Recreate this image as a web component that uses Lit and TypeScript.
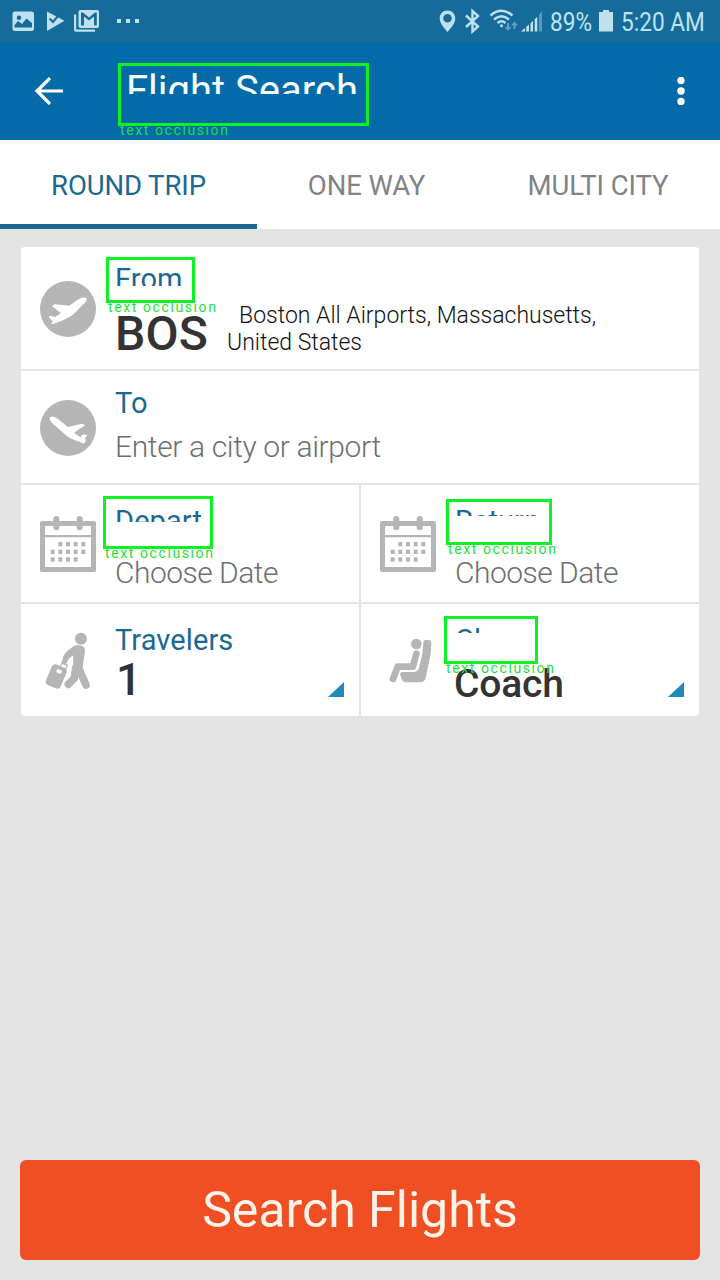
import { LitElement, html, svg, css } from "lit";
import { customElement, property } from "lit/decorators.js";

const statusLeft = svg`
  <path fill-rule="evenodd" d="M14.500 11.500H31.500Q34 11.500 34 14V28.500Q34 31 31.500 31H15Q12.500 31 12.500 28.500V14Q12.500 11.500 14.500 11.500ZM14.500 27.500H32V23L26.500 18.500L22 24L18 21L14.500 25ZM19 15.500A2.200 2.200 0 1 0 19 20A2.200 2.200 0 1 0 19 15.500Z"/>
  <path d="M47 11.500L64.500 20.800L47 31Z"/>
  <path fill="none" stroke="#156c9a" stroke-width="2" d="M49.500 18.500L53 22L60.500 13"/>
  <path fill-rule="evenodd" d="M80.500 10H97Q99 10 99 12V26Q99 28 97 28H80.500Q78.500 28 78.500 26V12Q78.500 10 80.500 10ZM81 25.500H84V16.500L89 20.500L94 16.500V25.500H96.800V12.500H95L89 17.500L83 12.500H81Z"/>
  <path d="M74 14.500H76.200V29.500H95V31.800H76Q74 31.800 74 29.800Z"/>
  <rect x="117" y="19" width="4" height="4"/><rect x="126" y="19" width="4" height="4"/><rect x="135" y="19" width="4" height="4"/>`;

const statusMid = svg`
  <path fill-rule="evenodd" d="M17.500 10.500C13 10.500 9.700 14 9.700 18.300C9.700 23.500 14 28 17.500 32C21 28 25.300 23.500 25.300 18.300C25.300 14 22 10.500 17.500 10.500ZM17.500 14A4.300 4.300 0 1 1 17.500 22.600A4.300 4.300 0 1 1 17.500 14Z"/>
  <path class="line" d="M36 15.500L48 26.500L42.500 31.500V11L48 16L36 27"/>
  <path class="line" d="M60.500 15.500Q71.500 6 82.500 15.500M64 19.500Q71.500 13 79 19.500M67.500 23Q71.500 19.500 75.500 23"/>
  <circle cx="71.500" cy="25.800" r="1.500"/>
  <path opacity=".45" d="M77 23H79V27H81.300L78 31L74.700 27H77ZM83.500 29V25.500H81L84.500 21.500L88 25.500H85.500V29Z"/>
  <path d="M91 31.500L95 28V31.500ZM96.200 27L99 24.500V31.500H96.200ZM100.500 23.200L103 20.800V31.500H100.500ZM104.700 19.300L107.300 16.800V31.500H104.700Z"/>
  <path opacity=".4" d="M109 15L112 11V31.500H109Z"/>`;

const icons: Record<string, unknown> = {
  takeoff: svg`<circle cx="84" cy="84" r="84"/>
    <path fill="#fff" d="M36 76Q39 71 46 70L88 74L112 57Q128 48 138 50Q143 53 137 62L108 92Q101 101 84 110L66 119L39 129Q34 130 34 126L39 121L26 109Q27 104 33 105L46 108L63 96Z"/>`,
  landing: svg`<circle cx="84" cy="84" r="84"/>
    <path fill="#fff" d="M29 52Q38 46 50 54L84 81L122 72Q132 71 135 76L102 98L121 112L126 105Q133 102 142 105L135 115L137 122L134 129Q129 132 121 127L91 115Q80 108 70 99L36 69Q28 61 29 52Z"/>`,
  calendar: svg`<path fill-rule="evenodd" d="M6 15H162Q168 15 168 21V162Q168 168 162 168H6Q0 168 0 162V21Q0 15 6 15ZM15 30V57H153V30ZM15 64V153H153V64Z"/>
    <rect x="40" y="0" width="18" height="43" rx="9"/><rect x="110" y="0" width="18" height="43" rx="9"/>
    ${[[1, 2, 3, 4], [0, 1, 2, 3, 4], [0, 1, 2, 3]].map((cols, r) =>
      cols.map((c) => svg`<rect x=${32 + c * 23} y=${78 + r * 23} width="12" height="13"/>`))}`,
  traveler: svg`<circle cx="123" cy="17" r="18"/>
    <path d="M101 39Q111 33 124 38Q136 42 135 55L127 107L101 118L99 67L86 78L78 94Q70 98 65 90L70 69Q73 61 83 53Z"/>
    <g fill="none" stroke="#b5b5b5" stroke-linecap="round" stroke-linejoin="round" stroke-width="23">
      <path d="M115 103L138 156"/><path d="M107 105L103 136L85 154"/></g>
    <g transform="rotate(23 49 130)"><rect x="25" y="97" width="48" height="67" rx="12"/>
      <path fill="none" stroke="#b5b5b5" stroke-width="4" d="M49 98V86H66V99"/><rect x="43" y="108" width="16" height="11" rx="3" fill="#fff"/></g>`,
  seat: svg`<circle cx="109" cy="33" r="16"/>
    <path d="M130 27Q132 20 142 20Q153 20 154 30L152 62L137 136Q133 148 120 148H78Q68 148 64 136L60 122Q61 117 69 117H100Q114 116 117 104L127 62Z"/>
    <path fill="none" stroke="#b5b5b5" stroke-width="20" stroke-linecap="round" stroke-linejoin="round" d="M109 62L99 101H53L39 138"/>`,
};

@customElement("field-cell")
class FieldCell extends LitElement {
  @property() icon = "";
  static styles = css`
    :host { display: flex; align-items: center; background: #fff; padding-left: 19px; box-sizing: border-box; position: relative; min-width: 0; }
    .icon { width: 56px; height: 56px; flex: none; fill: #b5b5b5; overflow: visible; margin-top: 2px; }
    .calendar { margin-top: 1px; }
    .body { align-self: stretch; margin-left: 19px; flex: 1; min-width: 0; }
    .corner { position: absolute; right: 15px; bottom: 19px; width: 16px; height: 15px; fill: #1f88bd; }
  `;
  render() {
    return html`<svg class="icon ${this.icon}" viewBox="0 0 168 168">${icons[this.icon]}</svg>
      <div class="body"><slot></slot></div>
      ${this.icon === "traveler" || this.icon === "seat"
        ? html`<svg class="corner" viewBox="0 0 16 15"><path d="M16 0V15H0Z"/></svg>` : ""}`;
  }
}

const marks = [
  [118, 63, 251, 63],
  [106, 257, 89, 46],
  [103, 496, 110, 53],
  [446, 499, 106, 46],
  [444, 616, 94, 48],
];

@customElement("app-root")
class AppRoot extends LitElement {
  static styles = css`
    :host { display: flex; flex-direction: column; position: relative; width: 720px; height: 1280px; overflow: hidden; background: #e4e4e4; font-family: Roboto, "Liberation Sans", sans-serif; white-space: nowrap; }
    .status { height: 42px; background: #156c9a; color: #bfe3f3; display: flex; justify-content: space-between; }
    .status svg { height: 42px; fill: #bfe0ef; flex: none; }
    .line { fill: none; stroke: #bfe0ef; stroke-width: 2.4; }
    .right { display: flex; width: 290px; }
    .stext { font-size: 26px; line-height: 44px; transform: scaleX(.87); transform-origin: 0 50%; }
    .pct { width: 48px; margin-left: 3px; }
    .time { margin-left: 6px; }
    .bar { height: 98px; background: #046aa8; color: #f4fcff; display: flex; align-items: center; }
    .back { width: 28px; height: 28px; margin-left: 35px; fill: none; stroke: #fff; stroke-width: 3.2; }
    .title { font-size: 40px; line-height: 48px; margin: 0 auto 0 63px; clip-path: inset(0 0 21px 0); }
    .more { width: 8px; height: 28px; fill: #fff; margin-right: 35px; }
    .tabs { height: 89px; background: #fff; display: grid; grid-template-columns: 257px 219px 244px; font-size: 27.500px; letter-spacing: -.1px; color: #808386; }
    .tab { display: flex; align-items: center; justify-content: center; padding-top: 7px; border-bottom: 5px solid transparent; }
    .active { color: #1b6893; border-color: #1b6893; }
    .card { margin: 18px 21px 0; display: grid; grid-template-columns: 338px 338px; grid-template-rows: 122px 112px 117px 112px; gap: 2px; border-radius: 4px; overflow: hidden; }
    .wide { grid-column: 1 / 3; }
    .label { font-size: 29px; line-height: 36px; color: #1b6893; margin-top: 14px; letter-spacing: .1px; }
    .low { margin-top: 18px; }
    .hint { font-size: 30px; line-height: 36px; font-weight: 300; color: #6c6f72; margin-top: 8px; letter-spacing: -.36px; }
    .date { margin-top: 16px; letter-spacing: -.5px; }
    .cut-from { clip-path: inset(0 0 11px 0); }
    .cut-depart { clip-path: inset(0 0 17px 0); }
    .cut-return { clip-path: inset(0 0 23px 0); }
    .cut-class { clip-path: inset(0 0 25px 0); }
    .origin { display: flex; align-items: flex-start; margin-top: 9px; color: #333; }
    .code { font-size: 48px; line-height: 56px; font-weight: 500; letter-spacing: .2px; }
    .place { font-size: 23px; line-height: 27px; font-weight: 300; color: #111; margin-left: 19px; margin-top: -4px; text-indent: 12px; }
    .value { font-weight: 500; color: #333; line-height: 44px; }
    .count { font-size: 45px; margin-top: 0; padding-left: 1px; }
    .cabin { font-size: 39px; margin-top: 4px; margin-left: -1px; letter-spacing: -.2px; }
    .search { margin: auto 20px 20px; height: 100px; border: 0; border-radius: 6px; background: #f04e23; color: #fff3ea; font: 400 50px/100px Roboto, sans-serif; padding: 0 0 2px; box-sizing: border-box; }
    .mark { position: absolute; box-sizing: border-box; border: 3px solid #0cf224; }
    .note { position: absolute; left: -1px; top: 100%; margin-top: -1px; font-size: 14px; line-height: 16px; font-weight: 400; letter-spacing: 1.600px; color: #1fdf38; }
  `;
  render() {
    return html`
      <div class="status">
        <svg width="150" viewBox="0 0 150 42">${statusLeft}</svg>
        <div class="right">
          <svg width="117" viewBox="0 0 117 42">${statusMid}</svg>
          <span class="stext pct">89%</span>
          <svg width="17" viewBox="0 0 17 42"><path d="M5 10H11V12H15V31.500H1V12H5Z"/></svg>
          <span class="stext time">5:20 AM</span>
        </div>
      </div>
      <div class="bar">
        <svg class="back" viewBox="0 0 28 28"><path d="M28 14H2M15 1L2 14L15 27"/></svg>
        <span class="title">Flight Search</span>
        <svg class="more" viewBox="0 0 8 28"><circle cx="4" cy="3.500" r="3.700"/><circle cx="4" cy="14" r="3.700"/><circle cx="4" cy="24.500" r="3.700"/></svg>
      </div>
      <div class="tabs">
        <div class="tab active">ROUND TRIP</div><div class="tab">ONE WAY</div><div class="tab">MULTI CITY</div>
      </div>
      <div class="card">
        <field-cell class="wide" icon="takeoff">
          <div class="label cut-from">From</div>
          <div class="origin"><div class="code">BOS</div><div class="place">Boston All Airports, Massachusetts,<br>United States</div></div>
        </field-cell>
        <field-cell class="wide" icon="landing">
          <div class="label">To</div><div class="hint">Enter a city or airport</div>
        </field-cell>
        <field-cell icon="calendar">
          <div class="label low cut-depart">Depart</div><div class="hint date">Choose Date</div>
        </field-cell>
        <field-cell icon="calendar">
          <div class="label low cut-return">Return</div><div class="hint date">Choose Date</div>
        </field-cell>
        <field-cell icon="traveler">
          <div class="label low">Travelers</div><div class="value count">1</div>
        </field-cell>
        <field-cell icon="seat">
          <div class="label low cut-class">Class</div><div class="value cabin">Coach</div>
        </field-cell>
      </div>
      <button class="search">Search Flights</button>
      ${marks.map(([x, y, w, h]) => html`<div class="mark" style="left:${x}px;top:${y}px;width:${w}px;height:${h}px"><span class="note">text occlusion</span></div>`)}
    `;
  }
}
